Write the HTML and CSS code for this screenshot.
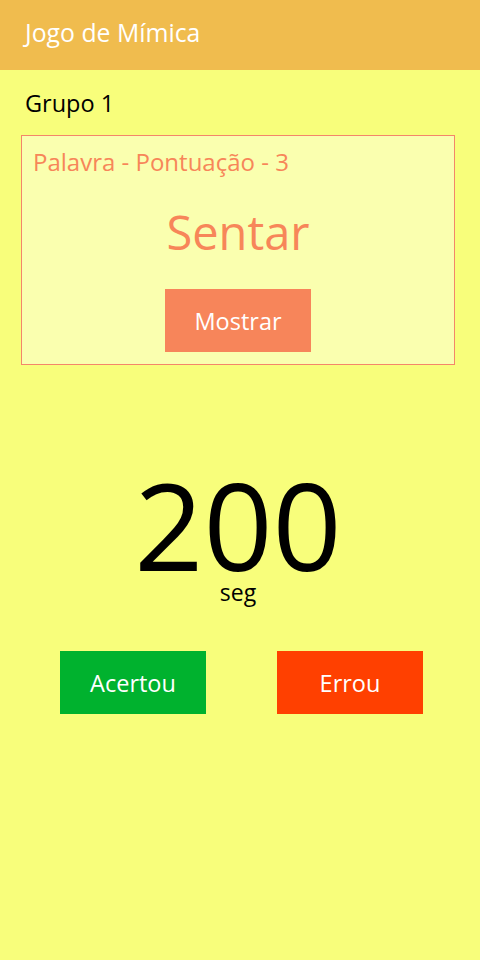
FILE: index.html
```html
<!DOCTYPE html>
<html lang="pt">
<head>
<meta charset="utf-8">
<title>Jogo de Mímica</title>
<link rel="stylesheet" href="styles.css">
</head>
<body>
<header class="topbar"><h1 class="title">Jogo de Mímica</h1></header>
<main class="content">
  <div class="group">Grupo 1</div>
  <section class="card">
    <div class="card-label">Palavra - Pontuação - 3</div>
    <div class="word">Sentar</div>
    <button class="btn btn-show">Mostrar</button>
  </section>
  <div class="timer">
    <div class="count">200</div>
    <div class="unit">seg</div>
  </div>
  <div class="actions">
    <button class="btn btn-ok">Acertou</button>
    <button class="btn btn-err">Errou</button>
  </div>
</main>
</body>
</html>
```
FILE: styles.css
```css
html, body {
  margin: 0;
  padding: 0;
  height: 100%;
}
body {
  background: #F8FE7B;
  font-family: "Open Sans", "Noto Sans", sans-serif;
  font-weight: 500;
  color: #000;
}
.topbar {
  height: 70px;
  background: #F0BC4E;
  padding: 16px 25px 0;
  box-sizing: border-box;
}
.title {
  margin: 0;
  font-size: 24.8px;
  font-weight: 500;
  color: #fff;
  line-height: 32px;
}
.content {
  padding: 0 25px 0 21px;
  display: flex;
  flex-direction: column;
}
.group {
  margin: 17px 0 0 4px;
  font-size: 23.5px;
  line-height: 32px;
}
.card {
  margin-top: 16px;
  width: 434px;
  height: 230px;
  box-sizing: border-box;
  border: 1px solid #F4866A;
  background: #FAFFAF;
  display: flex;
  flex-direction: column;
  align-items: center;
}
.card-label {
  align-self: flex-start;
  margin: 10px 0 0 11px;
  font-size: 24px;
  line-height: 32px;
  color: #F78659;
}
.word {
  margin-top: 24px;
  font-size: 47px;
  line-height: 60px;
  color: #F78659;
}
.btn {
  border: 0;
  font-family: inherit;
  font-weight: 500;
  color: #fff;
  font-size: 23.5px;
  width: 146px;
  height: 63px;
  padding: 0;
  cursor: pointer;
}
.btn-show {
  margin-top: 27px;
  background: #F7855A;
}
.timer {
  margin-top: 109px;
  display: flex;
  flex-direction: column;
  align-items: center;
}
.count {
  font-size: 121px;
  line-height: 100px;
  font-weight: 400;
}
.unit {
  margin-top: 6px;
  font-size: 23px;
  line-height: 24px;
}
.actions {
  margin-top: 47px;
  display: flex;
  justify-content: space-between;
  padding: 0 32px 0 39px;
}
.btn-ok { background: #00B22E; }
.btn-err { background: #FF4000; }
```
